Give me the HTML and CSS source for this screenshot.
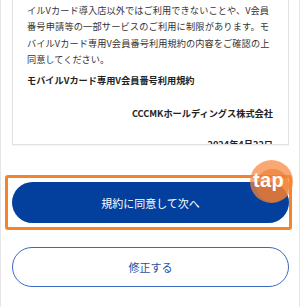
FILE: index.html
```html
<!DOCTYPE html>
<html lang="ja">
<head>
<meta charset="utf-8">
<link rel="stylesheet" href="styles.css">
</head>
<body>
<div class="page">
  <div class="card">
    <div class="para">
      <div class="ln">イルVカード導入店以外ではご利用できないことや、V会員</div>
      <div class="ln">番号申請等の一部サービスのご利用に制限があります。モ</div>
      <div class="ln tight">バイルVカード専用V会員番号利用規約の内容をご確認の上</div>
      <div class="last">同意してください。</div>
    </div>
    <div class="title">モバイルVカード専用V会員番号利用規約</div>
    <div class="company">CCCMKホールディングス株式会社</div>
    <div class="date">2024年4月22日</div>
  </div>
  <div class="actions">
    <button class="btn primary">規約に同意して次へ</button>
    <button class="btn secondary">修正する</button>
  </div>
  <div class="highlight"></div>
  <div class="tap">
    <span class="tap-outer"></span>
    <span class="tap-inner"></span>
    <span class="tap-label">tap</span>
  </div>
</div>
</body>
</html>
```
FILE: styles.css
```css
html, body {
  margin: 0;
  padding: 0;
  background: #ffffff;
}
body {
  font-family: "Noto Sans CJK JP", "Noto Sans", sans-serif;
  color: #333333;
}
.page {
  position: relative;
  width: 298px;
  height: 307px;
  border-left: 1px solid #e6e6e6;
  border-right: 1px solid #e6e6e6;
  overflow: hidden;
}
.card {
  margin: -1px 0 0 11px;
  width: 277px;
  height: 146px;
  box-sizing: border-box;
  border: 1px solid #e2e2e2;
  background: #fff;
  padding: 2px 15px 0 14px;
  overflow: hidden;
  font-size: 9.2px;
  line-height: 16.4px;
  box-shadow: 0 1px 1px rgba(0,0,0,0.04);
}
.para {
  width: 242px;
}
.ln {
  white-space: nowrap;
  text-align: justify;
  text-align-last: justify;
}
.tight {
  letter-spacing: -0.35px;
}
.title {
  margin-top: 4px;
  font-weight: bold;
  color: #222;
}
.company {
  margin-top: 16.6px;
  font-weight: bold;
  text-align: right;
  color: #222;
}
.date {
  margin-top: 15.2px;
  font-weight: bold;
  text-align: right;
  color: #222;
}
.actions {
  display: flex;
  flex-direction: column;
  gap: 24px;
  margin: 37px 0 0 11px;
  width: 277px;
}
.btn {
  display: flex;
  align-items: center;
  justify-content: center;
  font-family: "Noto Sans CJK JP", sans-serif;
  font-size: 11px;
  border-radius: 21px;
  box-sizing: border-box;
  width: 277px;
  padding: 0;
  cursor: pointer;
}
.primary {
  height: 41px;
  background: #033f9c;
  color: #ffffff;
  border: none;
}
.secondary {
  height: 40px;
  background: #ffffff;
  color: #1f4fa3;
  border: 1px solid #3c69c0;
  border-radius: 20px;
}
.highlight {
  position: absolute;
  left: 4px;
  top: 175px;
  width: 287px;
  height: 55px;
  box-sizing: border-box;
  border: 3px solid #f5832c;
  border-radius: 3px;
}
.tap {
  position: absolute;
  left: 249px;
  top: 160px;
  width: 44px;
  height: 44px;
}
.tap-outer {
  position: absolute;
  left: 0;
  top: 0;
  width: 43px;
  height: 43px;
  border-radius: 50%;
  background: rgba(246, 134, 58, 0.72);
}
.tap-inner {
  position: absolute;
  left: 6px;
  top: 9px;
  width: 33px;
  height: 33px;
  border-radius: 50%;
  background: rgba(236, 118, 40, 0.55);
}
.tap-label {
  position: absolute;
  left: 3px;
  top: 9px;
  font-family: "Liberation Sans", Arial, sans-serif;
  font-weight: bold;
  font-size: 20px;
  line-height: 22px;
  color: #ffffff;
  letter-spacing: 0.3px;
}
```
